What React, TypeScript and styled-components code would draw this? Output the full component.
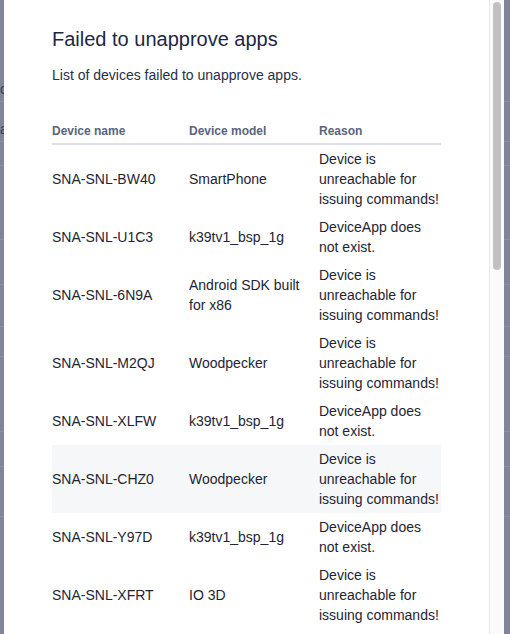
import React from "react";
import styled, { createGlobalStyle } from "styled-components";

type FailedDevice = {
  id: string;
  name: string;
  model: string;
  reason: string;
};

const UNREACHABLE = "Device is unreachable for issuing commands!";
const NO_APP = "DeviceApp does not exist.";

const devices: FailedDevice[] = [
  { id: "1", name: "SNA-SNL-BW40", model: "SmartPhone", reason: UNREACHABLE },
  { id: "2", name: "SNA-SNL-U1C3", model: "k39tv1_bsp_1g", reason: NO_APP },
  { id: "3", name: "SNA-SNL-6N9A", model: "Android SDK built for x86", reason: UNREACHABLE },
  { id: "4", name: "SNA-SNL-M2QJ", model: "Woodpecker", reason: UNREACHABLE },
  { id: "5", name: "SNA-SNL-XLFW", model: "k39tv1_bsp_1g", reason: NO_APP },
  { id: "6", name: "SNA-SNL-CHZ0", model: "Woodpecker", reason: UNREACHABLE },
  { id: "7", name: "SNA-SNL-Y97D", model: "k39tv1_bsp_1g", reason: NO_APP },
  { id: "8", name: "SNA-SNL-XFRT", model: "IO 3D", reason: UNREACHABLE },
];

const VIEW_RATIO = 634 / 1478;

// rows of the page that sits behind the overlay
const backgroundRows = [
  { h: 102, text: "c" },
  { h: 40, text: "a" },
  { h: 24, text: "" },
  { h: 74, text: "" },
  { h: 45, text: "" },
  { h: 42, text: "" },
  { h: 30, text: "" },
  { h: 75, text: "" },
  { h: 35, text: "" },
  { h: 50, text: "" },
  { h: 120, text: "" },
];

const GlobalStyle = createGlobalStyle`
  html, body {
    margin: 0;
    padding: 0;
    overflow: hidden;
  }
  body {
    font-family: "Liberation Sans", Arial, sans-serif;
    -webkit-font-smoothing: antialiased;
  }
  * {
    box-sizing: border-box;
  }
`;

const Backdrop = styled.div`
  position: fixed;
  inset: 0;
  background: #7e8698;
  display: flex;
  flex-direction: column;
`;

const BackgroundRow = styled.div<{ $h: number }>`
  height: ${(p) => p.$h}px;
  flex: none;
  border-bottom: 1px solid #8b92a2;
  display: flex;
  align-items: flex-end;
  padding-bottom: 4px;
  font-size: 14px;
  color: #34405c;
`;

const Modal = styled.div`
  position: fixed;
  top: 0;
  left: 4px;
  width: 500px;
  height: 100vh;
  background: #ffffff;
  display: flex;
`;

const Content = styled.div`
  flex: 1;
  min-width: 0;
  overflow: hidden;
  padding: 25px 48px 48px;
`;

const ScrollRail = styled.div`
  flex: none;
  width: 15px;
  background: #fafafa;
  border-left: 1px solid #e8e8e8;
  padding: 2px 3px 0 3px;
`;

const ScrollThumb = styled.div`
  width: 8px;
  border-radius: 4px;
  background: #c1c1c1;
`;

const Title = styled.h2`
  margin: 0;
  font-size: 20px;
  line-height: 28px;
  font-weight: 400;
  color: #1b2745;
`;

const Description = styled.p`
  margin: 12px 0 0;
  font-size: 14px;
  line-height: 20px;
  color: #26304a;
`;

const Table = styled.div`
  margin-top: 30px;
  display: flex;
  flex-direction: column;
`;

const Row = styled.div<{ $head?: boolean; $active?: boolean }>`
  display: grid;
  grid-template-columns: 137px 130px 1fr;
  align-items: center;
  background: ${(p) => (p.$active ? "#f6f7f9" : "transparent")};
  border-bottom: ${(p) => (p.$head ? "2px solid #dde0e6" : "none")};
`;

const HeadCell = styled.div`
  padding: 8px 8px 4px 0;
  font-size: 12px;
  line-height: 16px;
  font-weight: 700;
  color: #5a6480;
`;

const Cell = styled.div`
  padding: 4px 8px 4px 0;
  font-size: 14px;
  line-height: 20px;
  color: #1e2433;

  &:last-child {
    padding-right: 0;
  }
`;

export default function App() {
  return (
    <>
      <GlobalStyle />
      <Backdrop>
        {backgroundRows.map((r, i) => (
          <BackgroundRow key={i} $h={r.h}>
            {r.text}
          </BackgroundRow>
        ))}
      </Backdrop>
      <Modal role="dialog" aria-modal="true">
        <Content>
          <Title>Failed to unapprove apps</Title>
          <Description>List of devices failed to unapprove apps.</Description>
          <Table>
            <Row $head>
              <HeadCell>Device name</HeadCell>
              <HeadCell>Device model</HeadCell>
              <HeadCell>Reason</HeadCell>
            </Row>
            {devices.map((d) => (
              <Row key={d.id} $active={d.id === "6"}>
                <Cell>{d.name}</Cell>
                <Cell>{d.model}</Cell>
                <Cell>{d.reason}</Cell>
              </Row>
            ))}
          </Table>
        </Content>
        <ScrollRail>
          <ScrollThumb style={{ height: Math.round(634 * VIEW_RATIO) - 4 }} />
        </ScrollRail>
      </Modal>
    </>
  );
}
